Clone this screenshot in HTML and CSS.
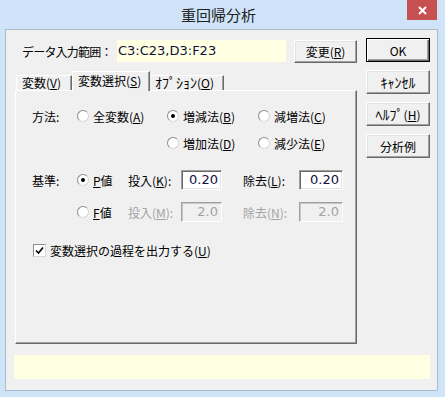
FILE: index.html
```html
<!DOCTYPE html>
<html lang="ja">
<head>
  <meta charset="UTF-8">
  <title>重回帰分析</title>
  <link rel="stylesheet" href="styles.css">
</head>
<body>
  <div class="window">
    <div class="titlebar">
      <span></span>
      <span class="title">重回帰分析</span>
      <span class="close">
        <svg width="9" height="9" viewBox="0 0 9 9"><path d="M1 1L8 8M8 1L1 8" stroke="#fff" stroke-width="2"/></svg>
      </span>
    </div>
    <div class="client">
      <div class="main">
        <div class="range-row">
          <span class="range-label">データ入力範囲：</span>
          <span class="range-field">C3:C23,D3:F23</span>
          <button class="btn change">変更(<u>R</u>)</button>
        </div>
        <div class="tabs">
          <span class="tab first">変数(<u>V</u>)</span>
          <span class="tab active">変数選択(<u>S</u>)</span>
          <span class="tab last"><span class="hw">ｵﾌﾟｼｮﾝ</span>(<u>O</u>)</span>
        </div>
        <div class="panel">
          <div class="row r-method">
            <span class="lbl">方法:</span>
            <span class="opt w90"><i class="radio"></i>全変数(<u>A</u>)</span>
            <span class="opt w91"><i class="radio on"></i>増減法(<u>B</u>)</span>
            <span class="opt"><i class="radio"></i>減増法(<u>C</u>)</span>
          </div>
          <div class="row r-method2">
            <span class="lbl"></span>
            <span class="opt w90"></span>
            <span class="opt w91"><i class="radio"></i>増加法(<u>D</u>)</span>
            <span class="opt"><i class="radio"></i>減少法(<u>E</u>)</span>
          </div>
          <div class="row r-crit">
            <span class="lbl">基準:</span>
            <span class="opt w51"><i class="radio on"></i><u>P</u>値</span>
            <span class="field-lbl w53">投入(<u>K</u>):</span>
            <span class="num w41">0.20</span>
            <span class="field-lbl w56 ml21">除去(<u>L</u>):</span>
            <span class="num w44">0.20</span>
          </div>
          <div class="row r-crit2">
            <span class="lbl"></span>
            <span class="opt w51"><i class="radio"></i><u>F</u>値</span>
            <span class="field-lbl w53 off">投入(<u>M</u>):</span>
            <span class="num w41 off">2.0</span>
            <span class="field-lbl w56 ml21 off">除去(<u>N</u>):</span>
            <span class="num w44 off">2.0</span>
          </div>
          <div class="row r-check">
            <span class="check">
              <svg width="9" height="9" viewBox="0 0 9 9"><path d="M1 4.5L3.5 7L8 1.5" stroke="#000" stroke-width="1.6" fill="none"/></svg>
            </span>
            変数選択の過程を出力する(<u>U</u>)
          </div>
        </div>
      </div>
      <div class="side">
        <button class="btn default">OK</button>
        <button class="btn"><span class="hw">ｷｬﾝｾﾙ</span></button>
        <button class="btn"><span class="hw">ﾍﾙﾌﾟ</span>(<u>H</u>)</button>
        <button class="btn">分析例</button>
      </div>
      <div class="status"></div>
    </div>
  </div>
</body>
</html>
```

FILE: styles.css
```css
body {
  margin: 0;
  font-family: "Noto Sans CJK JP", "Noto Sans", sans-serif;
  font-size: 12px;
  color: #000;
}
.window {
  width: 445px;
  height: 397px;
  background-color: #cfe4f8;
  overflow: hidden;
}
.titlebar {
  display: grid;
  grid-template-columns: 1fr auto 1fr;
  height: 29px;
  padding-right: 8px;
}
.title {
  font-size: 15px;
  line-height: 29px;
  color: #222;
}
.close {
  justify-self: end;
  align-self: start;
  width: 30px;
  height: 20px;
  background-color: #c75050;
  display: flex;
  align-items: center;
  justify-content: center;
}
.close svg {
  display: block;
}
.client {
  box-sizing: border-box;
  margin-left: 5px;
  width: 433px;
  height: 362px;
  border: 1px solid #aabdd0;
  background-color: #f0f0f0;
  padding: 8px 7px 0 9px;
  display: grid;
  grid-template-columns: 342px 64px;
  grid-template-rows: 306px auto;
  column-gap: 9px;
}
.hw {
  font-size: 14px;
  line-height: 0;
}

/* top row */
.range-row {
  display: flex;
  align-items: center;
  margin-top: 2px;
  height: 23px;
  padding-left: 7px;
}
.range-label {
  width: 95px;
  letter-spacing: -0.8px;
  white-space: nowrap;
}
.range-field {
  box-sizing: border-box;
  width: 169px;
  height: 22px;
  background-color: #ffffe1;
  font-family: "DejaVu Sans", sans-serif;
  font-size: 13px;
  line-height: 22px;
  padding-left: 1px;
  color: #10103c;
  align-self: flex-start;
}
.btn {
  box-sizing: border-box;
  height: 24px;
  padding: 0;
  font-family: "Noto Sans CJK JP", "Noto Sans", sans-serif;
  font-size: 12px;
  color: #000;
  background-color: #f0f0f0;
  border: 1px solid;
  border-color: #fff #696969 #696969 #fff;
  box-shadow: inset -1px -1px 0 #a0a0a0, inset 1px 1px 0 #e3e3e3;
}
.change {
  margin-left: 8px;
  width: 63px;
  height: 23px;
}
.btn.default {
  border: 1px solid #000;
  box-shadow: inset 1px 1px 0 #fff, inset -1px -1px 0 #696969, inset -2px -2px 0 #a0a0a0;
}

/* tabs */
.tabs {
  display: flex;
  align-items: flex-end;
  height: 19px;
  margin-top: 8px;
}
.tab {
  box-sizing: border-box;
  height: 15px;
  line-height: 13px;
  border-top: 1px solid #fff;
  border-left: 1px solid #fff;
  border-right: 1px solid #696969;
  box-shadow: inset -1px 0 0 #a0a0a0;
  padding-left: 5px;
  white-space: nowrap;
}
.tab.first {
  margin-left: 1px;
  width: 56px;
}
.tab.active {
  width: 78px;
  height: 20px;
  line-height: 18px;
  margin-bottom: -1px;
  background-color: #f0f0f0;
  position: relative;
  z-index: 1;
}
.tab.last {
  width: 74px;
  border-left: none;
}

/* panel */
.panel {
  box-sizing: border-box;
  height: 254px;
  border: 1px solid;
  border-color: #fff #696969 #696969 #fff;
  box-shadow: inset -1px -1px 0 #a0a0a0;
  padding: 15px 0 0 16px;
}
.row {
  display: flex;
  align-items: center;
  height: 20px;
  white-space: nowrap;
}
.r-method2 { margin-top: 7px; }
.r-crit { margin-top: 17px; }
.r-crit2 { margin-top: 12px; }
.r-check { margin-top: 18px; padding-left: 1px; }
.lbl {
  width: 45px;
}
.opt {
  display: flex;
  align-items: center;
}
.w90 { width: 90px; }
.w91 { width: 91px; }
.w51 { width: 51px; }
.w53 { width: 53px; }
.w56 { width: 56px; }
.w41 { width: 41px; }
.w44 { width: 44px; }
.ml21 { margin-left: 21px; }
.radio {
  box-sizing: border-box;
  width: 12px;
  height: 12px;
  border-radius: 50%;
  border: 1px solid;
  border-color: #8d8d8d #d8d8d8 #d8d8d8 #8d8d8d;
  background-color: #fff;
  margin-right: 4px;
  display: flex;
  align-items: center;
  justify-content: center;
}
.radio.on::after {
  content: "";
  width: 4px;
  height: 4px;
  border-radius: 50%;
  background-color: #000;
}
.num {
  box-sizing: border-box;
  height: 20px;
  border: 1px solid;
  border-color: #a0a0a0 #fff #fff #a0a0a0;
  box-shadow: inset 1px 1px 0 #696969, inset -1px -1px 0 #e3e3e3;
  background-color: #fff;
  text-align: right;
  padding-right: 3px;
  font-family: "DejaVu Sans", sans-serif;
  font-size: 13px;
  line-height: 18px;
  color: #10103c;
}
.off {
  color: #a3a3a3;
}
.num.off {
  background-color: #f0f0f0;
  box-shadow: inset 1px 1px 0 #c8c8c8;
}
.check {
  box-sizing: border-box;
  width: 13px;
  height: 13px;
  border: 1px solid;
  border-color: #8d8d8d #d8d8d8 #d8d8d8 #8d8d8d;
  background-color: #fff;
  margin-right: 4px;
  display: flex;
  align-items: center;
  justify-content: center;
}

/* right buttons */
.side {
  display: flex;
  flex-direction: column;
  gap: 8px;
}
.side .btn {
  width: 64px;
}

.status {
  grid-column: 1 / 3;
  margin: 11px 0 0 -1px;
  width: 416px;
  height: 24px;
  background-color: #ffffe1;
}
```
